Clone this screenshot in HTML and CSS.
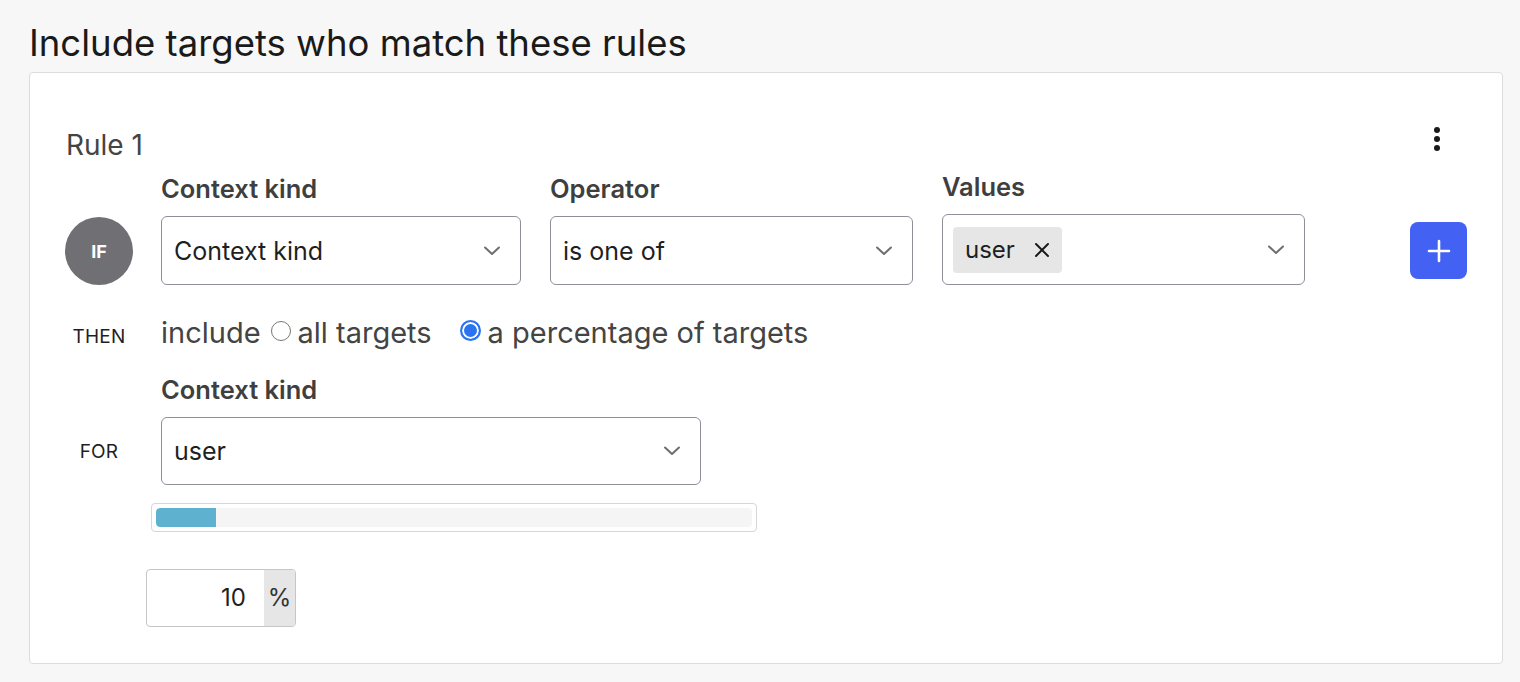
FILE: index.html
```html
<!DOCTYPE html>
<html lang="en">
<head>
<meta charset="utf-8">
<title>Targeting rules</title>
<link rel="stylesheet" href="styles.css">
</head>
<body>
<div class="page">
  <h1 class="title">Include targets who match these rules</h1>
  <section class="card">
    <div class="rule-head">
      <span class="rule-name">Rule 1</span>
      <button class="kebab" aria-label="More">
        <svg width="8" height="26" viewBox="0 0 8 26"><circle cx="4" cy="4" r="3" fill="#1a1a1a"/><circle cx="4" cy="13" r="3" fill="#1a1a1a"/><circle cx="4" cy="22" r="3" fill="#1a1a1a"/></svg>
      </button>
    </div>

    <div class="cond-row">
      <div class="side"><div class="if-badge">IF</div></div>
      <div class="field f-kind">
        <div class="label">Context kind</div>
        <div class="select">
          <span class="sel-text">Context kind</span>
          <svg class="chev" width="18" height="10" viewBox="0 0 18 10"><path d="M2 1.5 L9 8 L16 1.5" fill="none" stroke="#6e6e6e" stroke-width="2" stroke-linecap="round" stroke-linejoin="round"/></svg>
        </div>
      </div>
      <div class="field f-op">
        <div class="label">Operator</div>
        <div class="select">
          <span class="sel-text">is one of</span>
          <svg class="chev" width="18" height="10" viewBox="0 0 18 10"><path d="M2 1.5 L9 8 L16 1.5" fill="none" stroke="#6e6e6e" stroke-width="2" stroke-linecap="round" stroke-linejoin="round"/></svg>
        </div>
      </div>
      <div class="field f-val">
        <div class="label">Values</div>
        <div class="select multi">
          <span class="tag">user
            <svg class="tag-x" width="16" height="16" viewBox="0 0 16 16"><path d="M2 2 L14 14 M14 2 L2 14" stroke="#1a1a1a" stroke-width="2" stroke-linecap="round"/></svg>
          </span>
          <svg class="chev" width="18" height="10" viewBox="0 0 18 10"><path d="M2 1.5 L9 8 L16 1.5" fill="none" stroke="#6e6e6e" stroke-width="2" stroke-linecap="round" stroke-linejoin="round"/></svg>
        </div>
      </div>
      <button class="add-btn" aria-label="Add">
        <svg width="24" height="24" viewBox="0 0 24 24"><path d="M12 2 V22 M2 12 H22" stroke="#fff" stroke-width="2.6" stroke-linecap="round"/></svg>
      </button>
    </div>

    <div class="then-row">
      <div class="side"><span class="kw">THEN</span></div>
      <div class="then-body">
        <span>include</span>
        <label class="radio"><span class="dot"></span>all targets</label>
        <label class="radio on"><span class="dot"></span>a percentage of targets</label>
      </div>
    </div>

    <div class="for-label-row">
      <div class="side"></div>
      <div class="label">Context kind</div>
    </div>

    <div class="for-row">
      <div class="side"><span class="kw">FOR</span></div>
      <div class="select f-for">
        <span class="sel-text">user</span>
        <svg class="chev" width="18" height="10" viewBox="0 0 18 10"><path d="M2 1.5 L9 8 L16 1.5" fill="none" stroke="#6e6e6e" stroke-width="2" stroke-linecap="round" stroke-linejoin="round"/></svg>
      </div>
    </div>

    <div class="slider-row">
      <div class="side"></div>
      <div class="slider"><div class="track"><div class="fill" style="width:10%"></div></div></div>
    </div>

    <div class="pct-row">
      <div class="side"></div>
      <div class="pct">
        <span class="pct-val">10</span>
        <span class="pct-suffix">%</span>
      </div>
    </div>
  </section>
</div>
</body>
</html>
```
FILE: styles.css
```css
* { box-sizing: border-box; }
html, body { margin: 0; padding: 0; }
body {
  background: #f7f7f7;
  font-family: Inter, "Noto Sans", sans-serif;
  color: #1f1f1f;
}
.page { padding: 21px 17px 0 29px; }
.title {
  margin: 0 0 7px 0;
  font-size: 36.5px;
  line-height: 44px;
  font-weight: 400;
  color: #1a1a1a;
}
.card {
  background: #fff;
  border: 1px solid #dcdcdc;
  border-radius: 4px;
  padding: 52px 35px 36px 35px;
  height: 592px;
}
.rule-head {
  display: flex;
  justify-content: space-between;
  align-items: flex-start;
  padding-left: 1px;
  height: 40px;
}
.rule-name { font-size: 28px; line-height: 40px; color: #444; }
.kebab {
  border: 0; background: none; padding: 0; margin: 1px 26px 0 0;
  width: 8px; height: 26px; display: block;
}
.kebab svg { display: block; }

.side { width: 68px; flex: none; margin-right: 28px; display: flex; justify-content: center; }
.cond-row { display: flex; align-items: flex-end; margin-top: 7px; }
.if-badge {
  width: 68px; height: 68px; border-radius: 50%;
  background: #707074; color: #fff;
  font-weight: 700; font-size: 18px;
  display: flex; align-items: center; justify-content: center;
}
.field { display: flex; flex-direction: column; }
.f-kind { width: 360px; margin-right: 29px; }
.f-op { width: 363px; margin-right: 29px; }
.f-val { width: 363px; margin-right: 105px; }
.label {
  font-size: 25.5px; font-weight: 600; color: #3f3f3f;
  line-height: 30px; margin-bottom: 12px;
}
.select {
  height: 69px;
  border: 1px solid #8d9098;
  border-radius: 6px;
  background: #fff;
  display: flex; align-items: center; justify-content: space-between;
  padding: 0 19px 0 12px;
}
.sel-text { font-size: 25px; color: #1f1f1f; }
.chev { display: block; flex: none; }
.select.multi { height: 71px; padding-left: 10px; }
.tag {
  display: flex; align-items: center;
  height: 46px; background: #e6e6e6; border-radius: 4px;
  padding: 0 12px 0 12px;
  font-size: 24px; color: #1f1f1f;
}
.tag-x { margin-left: 19px; width: 16px; height: 16px; }
.add-btn {
  width: 57px; height: 57px; border: 0; border-radius: 8px;
  background: #4361f2; display: flex; align-items: center; justify-content: center;
  margin-bottom: 6px; padding: 0;
}
.add-btn svg { display: block; }

.then-row { display: flex; align-items: center; margin-top: 30px; }
.kw { font-size: 19px; color: #1f1f1f; letter-spacing: 0.2px; padding-top: 6px; }
.then-body { display: flex; align-items: center; font-size: 29px; color: #444; line-height: 36px; }
.radio { display: flex; align-items: center; margin-left: 10px; }
.radio + .radio { margin-left: 28px; }
.dot {
  width: 20px; height: 20px; border-radius: 50%;
  border: 1px solid #777; margin-right: 7px; margin-top: -5px;
  background: #fff;
}
.radio.on .dot {
  border: 2px solid #2b73f0;
  box-shadow: inset 0 0 0 2px #fff;
  background: #2b73f0;
  width: 21px; height: 21px;
}
.for-label-row { display: flex; margin-top: 24px; }
.for-label-row .label { margin-bottom: 0; }
.for-row { display: flex; align-items: center; margin-top: 12px; }
.for-row .kw { padding-top: 0; }
.f-for { width: 540px; height: 68px; }

.slider-row { display: flex; margin-top: 18px; }
.slider {
  width: 606px; margin-left: -10px;
  height: 29px; border: 1px solid #d6d6d6; border-radius: 4px;
  padding: 4px;
}
.track { height: 19px; background: #f5f5f5; border-radius: 4px; overflow: hidden; }
.fill { height: 100%; background: #5eb2cf; border-radius: 4px 0 0 4px; }

.pct-row { display: flex; margin-top: 37px; }
.pct {
  margin-left: -15px;
  width: 150px; height: 58px;
  border: 1px solid #c6c6c6; border-radius: 4px;
  display: flex; overflow: hidden;
}
.pct-val {
  flex: 1; text-align: right; padding-right: 18px;
  font-size: 24px; line-height: 56px; color: #1f1f1f;
}
.pct-suffix {
  width: 31px; background: #e6e6e6; text-align: center;
  font-size: 24px; line-height: 56px; color: #333;
}
```
